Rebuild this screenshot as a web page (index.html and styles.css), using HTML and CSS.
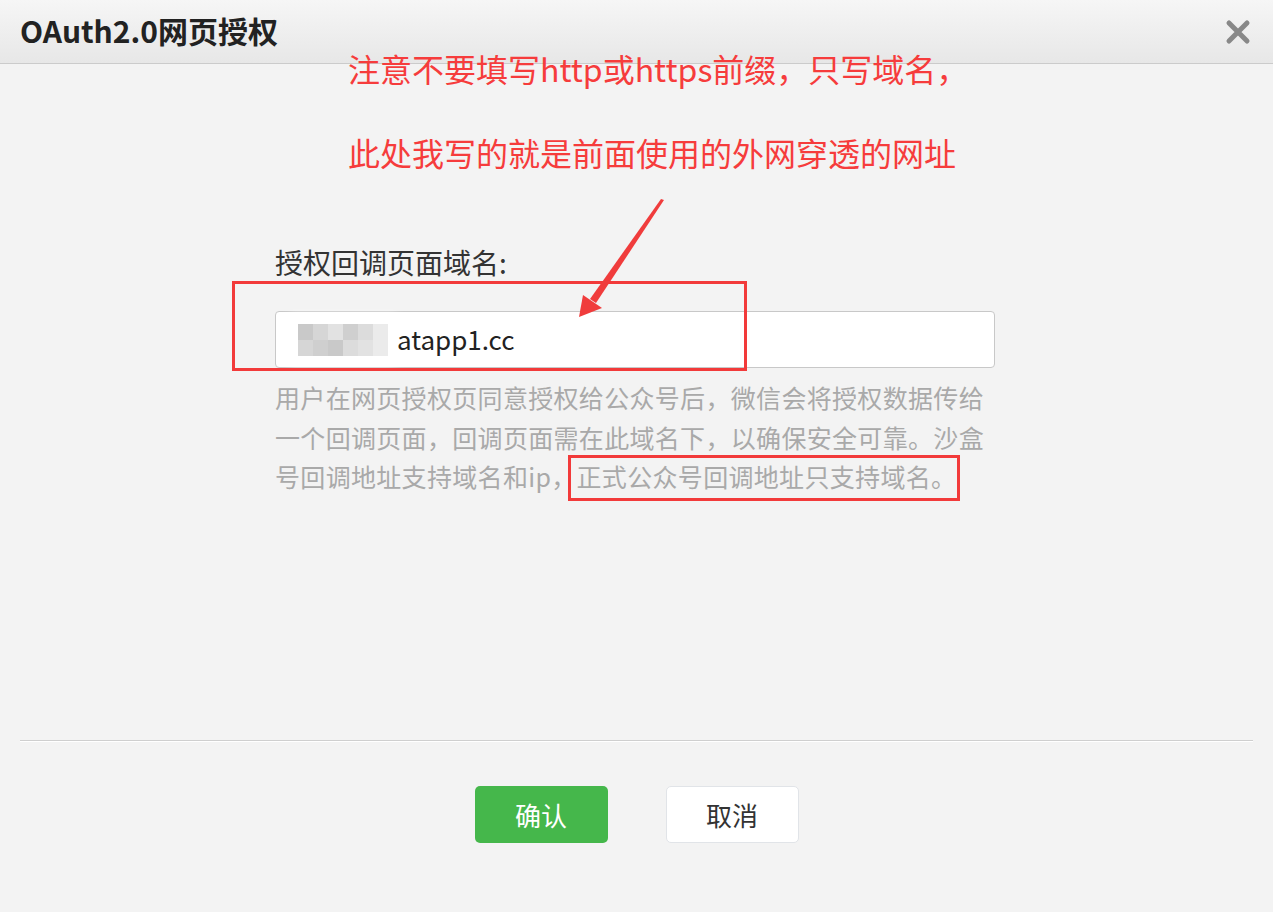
FILE: index.html
```html
<!DOCTYPE html>
<html lang="zh-CN">
<head>
<meta charset="utf-8">
<title>OAuth2.0网页授权</title>
<link rel="stylesheet" href="styles.css">
</head>
<body>
<div class="dialog">
  <header class="dlg-head">
    <h1 class="dlg-title">OAuth2.0网页授权</h1>
    <button class="dlg-close" aria-label="关闭">
      <svg width="26" height="26" viewBox="0 0 26 26"><path d="M4 4 L22 22 M22 4 L4 22" stroke="#888" stroke-width="5" stroke-linecap="round"/></svg>
    </button>
  </header>

  <main class="dlg-body">
    <div class="form">
      <label class="form-label">授权回调页面域名:</label>
      <div class="input-wrap">
        <div class="input">
          <span class="mosaic">
            <i class="m1"></i><i class="m2"></i><i class="m3"></i><i class="m4"></i><i class="m5"></i><i class="m6"></i>
            <i class="m2"></i><i class="m4"></i><i class="m1"></i><i class="m5"></i><i class="m3"></i><i class="m6"></i>
          </span>
          <span class="input-text">atapp1.cc</span>
        </div>
        <span class="mark mark-input"></span>
      </div>
      <p class="help">用户在网页授权页同意授权给公众号后，微信会将授权数据传给一个回调页面，回调页面需在此域名下，以确保安全可靠。沙盒号回调地址支持域名和ip，<span class="marked">正式公众号回调地址只支持域名。</span></p>
    </div>
  </main>

  <footer class="dlg-foot">
    <button class="btn btn-primary">确认</button>
    <button class="btn btn-default">取消</button>
  </footer>
</div>

<div class="note">
  <p>注意不要填写http或https前缀，只写域名，</p>
  <p>此处我写的就是前面使用的外网穿透的网址</p>
</div>
<svg class="arrow" width="1273" height="912" viewBox="0 0 1273 912">
  <polygon points="661,199 664,200 596,303 590,299" fill="#f03c3c"/>
  <polygon points="579,317 583,295 602,308" fill="#f03c3c"/>
</svg>
</body>
</html>
```
FILE: styles.css
```css
html, body {
  margin: 0;
  padding: 0;
}
body {
  width: 1273px;
  height: 912px;
  background: #f3f3f3;
  font-family: "Noto Sans CJK SC", "Noto Sans", sans-serif;
  color: #333;
  position: relative;
  overflow: hidden;
}
.dialog {
  display: flex;
  flex-direction: column;
  height: 912px;
}
.dlg-head {
  height: 63px;
  border-bottom: 1px solid #cbcbcb;
  background: linear-gradient(#f6f6f6, #e7e7e7);
  display: flex;
  align-items: center;
  justify-content: space-between;
  padding: 0 22px 0 20px;
}
.dlg-title {
  margin: 0;
  font-size: 30px;
  font-weight: 700;
  color: #222;
  line-height: 1;
  position: relative;
  top: -2px;
}
.dlg-close {
  border: 0;
  background: none;
  padding: 0;
  width: 26px;
  height: 26px;
  display: flex;
}
.dlg-body {
  height: 676px;
  box-sizing: border-box;
  padding-top: 178px;
  display: flex;
  justify-content: center;
}
.form {
  width: 720px;
  margin-left: -3px;
}
.form-label {
  display: block;
  font-size: 28px;
  line-height: 40px;
  color: #333;
  margin-bottom: 29px;
}
.input-wrap {
  position: relative;
}
.input {
  height: 55px;
  background: #fff;
  border: 1px solid #c8c8c8;
  border-radius: 4px;
  display: flex;
  align-items: center;
  padding-left: 22px;
}
.mosaic {
  display: grid;
  grid-template-columns: repeat(6, 15px);
  grid-template-rows: repeat(2, 16px);
  width: 90px;
  margin-right: 9px;
  box-shadow: 0 0 10px 8px #fff;
}
.mosaic i { display: block; }
.m1 { background: #c9c9c9; }
.m2 { background: #d6d6d6; }
.m3 { background: #e2e2e2; }
.m4 { background: #cfcfcf; }
.m5 { background: #dcdcdc; }
.m6 { background: #ebebeb; }
.input-text {
  font-size: 26px;
  color: #222;
  line-height: 1;
  position: relative;
  top: -1px;
}
.mark {
  position: absolute;
  border: 3px solid #f23a3a;
  box-sizing: border-box;
  pointer-events: none;
}
.mark-input {
  left: -43px;
  top: -30px;
  width: 515px;
  height: 90px;
}
.help {
  margin: 10px 0 0;
  font-size: 25px;
  line-height: 39.5px;
  letter-spacing: 0.32px;
  color: #a9a9a9;
}
.marked {
  position: relative;
}
.marked::after {
  content: "";
  position: absolute;
  left: -9px;
  right: -4px;
  top: -3px;
  bottom: -7px;
  border: 3px solid #f23a3a;
  pointer-events: none;
}
.dlg-foot {
  margin: 0 20px;
  border-top: 1px solid #cfcfcf;
  box-shadow: inset 0 1px 0 #fff;
  padding-top: 45px;
  display: flex;
  justify-content: center;
  gap: 58px;
}
.btn {
  width: 133px;
  height: 57px;
  border-radius: 5px;
  font-family: inherit;
  font-size: 26px;
  padding: 0;
  cursor: pointer;
}
.btn-primary {
  background: #45b74b;
  border: 0;
  color: #fff;
}
.btn-default {
  background: #fff;
  border: 1px solid #e1e4e8;
  color: #333;
}
.note {
  position: absolute;
  left: 348px;
  top: 44px;
  color: #f63c3c;
  font-size: 32px;
  line-height: 48px;
}
.note p {
  margin: 0 0 36px;
  white-space: nowrap;
}
.arrow {
  position: absolute;
  left: 0;
  top: 0;
  pointer-events: none;
}
```
